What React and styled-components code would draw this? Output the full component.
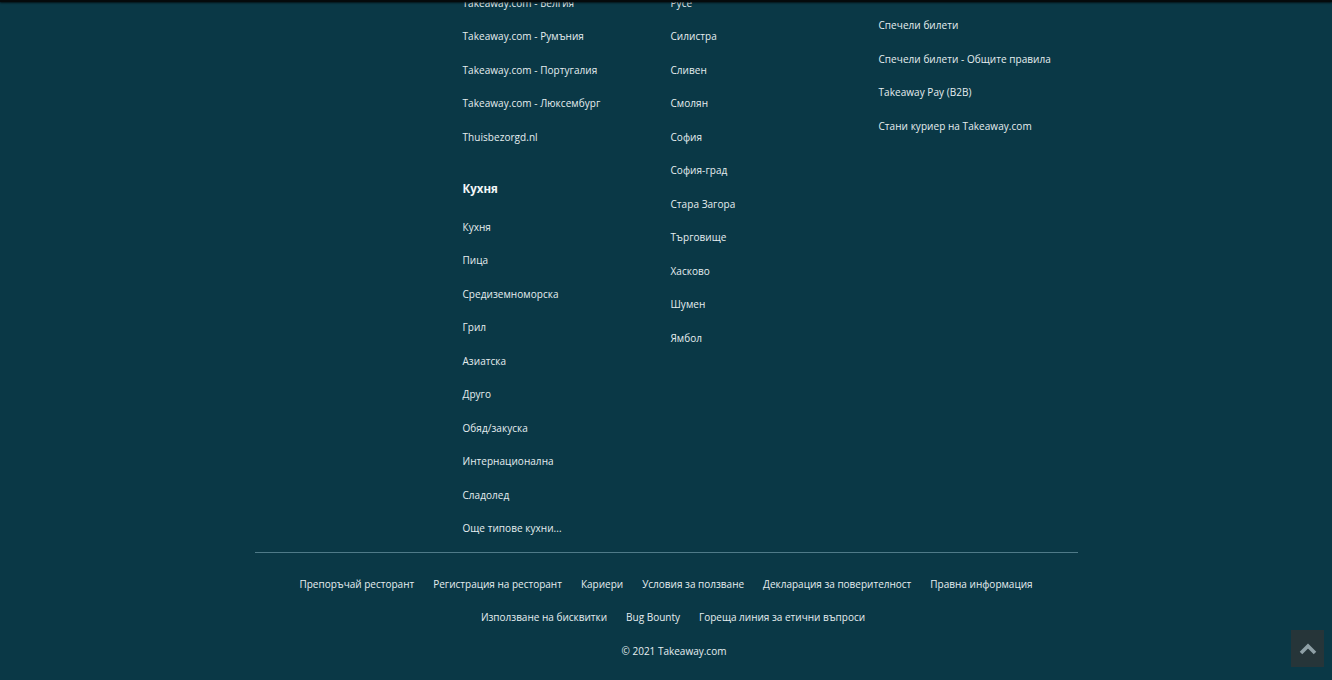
import styled, {createGlobalStyle} from 'styled-components';

const GlobalStyle = createGlobalStyle`
    html, body {
        margin: 0;
        padding: 0;
        background: #0a3846;
        overflow: hidden;
    }
    body {
        font-family: "Open Sans", "Noto Sans", sans-serif;
        color: #e6eef0;
    }
`;

const countries = [
    'Takeaway.com - Белгия',
    'Takeaway.com - Румъния',
    'Takeaway.com - Португалия',
    'Takeaway.com - Люксембург',
    'Thuisbezorgd.nl'
];

const kitchens = [
    'Кухня',
    'Пица',
    'Средиземноморска',
    'Грил',
    'Азиатска',
    'Друго',
    'Обяд/закуска',
    'Интернационална',
    'Сладолед',
    'Още типове кухни...'
];

const cities = [
    'Русе',
    'Силистра',
    'Сливен',
    'Смолян',
    'София',
    'София-град',
    'Стара Загора',
    'Търговище',
    'Хасково',
    'Шумен',
    'Ямбол'
];

const about = [
    'Спечели билети',
    'Спечели билети - Общите правила',
    'Takeaway Pay (B2B)',
    'Стани куриер на Takeaway.com'
];

const mainLinks = [
    'Препоръчай ресторант',
    'Регистрация на ресторант',
    'Кариери',
    'Условия за ползване',
    'Декларация за поверителност',
    'Правна информация'
];

const extraLinks = [
    'Използване на бисквитки',
    'Bug Bounty',
    'Гореща линия за етични въпроси'
];

export default function App() {
    return (
        <>
            <GlobalStyle/>
            <HeaderEdge/>
            <Footer>
                <Columns>
                    <Column/>
                    <Column>
                        <List>
                            {countries.map(c => <Item key={c}><Link href='#'>{c}</Link></Item>)}
                        </List>
                        <Heading>Кухня</Heading>
                        <List>
                            {kitchens.map(k => <Item key={k}><Link href='#'>{k}</Link></Item>)}
                        </List>
                    </Column>
                    <Column>
                        <List>
                            {cities.map(c => <Item key={c}><Link href='#'>{c}</Link></Item>)}
                        </List>
                    </Column>
                    <Column $offset={22.5}>
                        <List>
                            {about.map(a => <Item key={a}><Link href='#'>{a}</Link></Item>)}
                        </List>
                    </Column>
                </Columns>
                <Divider/>
                <BottomLinks $top={14}>
                    {mainLinks.map(l => <BottomLink key={l} href='#'>{l}</BottomLink>)}
                </BottomLinks>
                <BottomLinks $shift={14}>
                    {extraLinks.map(l => <BottomLink key={l} href='#'>{l}</BottomLink>)}
                </BottomLinks>
                <Copyright>© 2021 Takeaway.com</Copyright>
            </Footer>
            <ScrollTop aria-label='Нагоре'>
                <svg width='18' height='12' viewBox='0 0 18 12'>
                    <path d='M2 10 L9 3 L16 10' fill='none' stroke='#8fa0a6' strokeWidth='3.6' strokeLinejoin='miter'/>
                </svg>
            </ScrollTop>
        </>
    );
}

const HeaderEdge = styled.div`
    position: fixed;
    top: 0;
    left: 0;
    right: 0;
    height: 2px;
    background: #050a0c;
    box-shadow: 0 1px 2px rgba(0, 0, 0, 0.7);
    z-index: 10;
`;

const Footer = styled.footer`
    width: 823px;
    margin: -14.25px auto 0;
`;

const Columns = styled.div`
    display: grid;
    grid-template-columns: 208px 208px 208px 1fr;
`;

const Column = styled.div`
    padding-top: ${p => p.$offset || 0}px;
`;

const List = styled.ul`
    list-style: none;
    margin: 0;
    padding: 0;
`;

const Item = styled.li`
    height: 33.5px;
    display: flex;
    align-items: center;
`;

const Link = styled.a`
    color: #e6eef0;
    text-decoration: none;
    font-size: 10px;
    font-weight: 500;
    letter-spacing: 0.05px;
    white-space: nowrap;
`;

const Heading = styled.h3`
    margin: 0;
    padding: 27px 0 12.5px;
    line-height: 17px;
    font-size: 11.5px;
    font-weight: 700;
    color: #f2f6f7;
`;

const Divider = styled.hr`
    margin: 7px 0 0;
    border: 0;
    border-top: 1px solid #4f7a88;
`;

const BottomLinks = styled.nav`
    display: flex;
    justify-content: center;
    column-gap: 19px;
    padding: ${p => p.$top || 0}px 0 0 ${p => p.$shift || 0}px;
`;

const BottomLink = styled.a`
    height: 33.5px;
    display: flex;
    align-items: center;
    color: #e6eef0;
    text-decoration: none;
    font-size: 10px;
    font-weight: 500;
    white-space: nowrap;
`;

const Copyright = styled.p`
    margin: 0;
    padding-left: 16px;
    height: 33.5px;
    display: flex;
    align-items: center;
    justify-content: center;
    font-size: 10px;
    font-weight: 500;
`;

const ScrollTop = styled.button`
    position: fixed;
    right: 8px;
    bottom: 13px;
    width: 33px;
    height: 37px;
    border: 0;
    padding: 0;
    background: rgba(48, 52, 54, 0.75);
    display: flex;
    align-items: center;
    justify-content: center;
    cursor: pointer;
`;
